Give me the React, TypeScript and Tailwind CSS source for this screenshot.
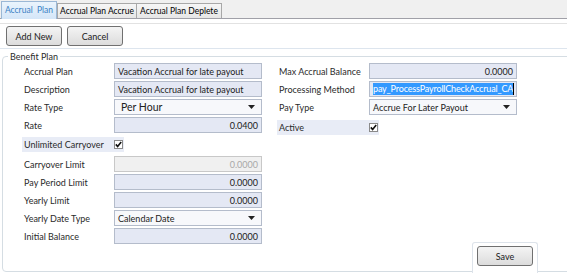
// App.tsx
import React from "react";

const font = "font-['Lato',_'Liberation_Sans',_sans-serif]";

const Check: React.FC = () => (
  <svg width="9" height="9" viewBox="0 0 9 9" className="block">
    <rect x="0.5" y="0.5" width="8" height="8" fill="#fff" stroke="#8a8a8a" />
    <path d="M1.8 4.4 L3.6 6.4 L7.2 2" stroke="#111" strokeWidth="1.6" fill="none" />
  </svg>
);

const Arrow: React.FC = () => (
  <svg width="7" height="4" viewBox="0 0 7 4" className="block">
    <path d="M0 0 H7 L3.5 4 Z" fill="#222" />
  </svg>
);

type FieldProps = {
  label: string;
  value: string;
  align?: "left" | "right";
  kind?: "text" | "select" | "disabled" | "selected";
  big?: boolean;
};

const Field: React.FC<FieldProps> = ({ label, value, align = "left", kind = "text", big }) => {
  let box = "bg-[#e4e8f4] border-[#b4bccb]";
  if (kind === "select") box = "bg-[#f7f8fb] border-[#b4bccb]";
  if (kind === "disabled") box = "bg-[#f0f0f0] border-[#c8c8c8] text-[#a8a8a8]";
  return (
    <div className="flex items-center h-[16px]">
      <div className="w-[92px] pl-[2px] text-[#2a2a2a]">{label}</div>
      <div
        className={`w-[148px] h-[16px] border flex items-center px-[3px] text-[#222] ${box} ${
          align === "right" ? "justify-end" : "justify-between"
        }`}
      >
        {kind === "selected" ? (
          <span className="flex items-center">
            <span className="bg-[#3399ff] text-white leading-[12px] tracking-[-0.15px]">{value}</span>
            <span className="w-px h-[12px] bg-black" />
          </span>
        ) : (
          <span className={big ? "text-[10.5px] pl-[3px]" : ""}>{value}</span>
        )}
        {kind === "select" && (
          <span className="pr-[3px]">
            <Arrow />
          </span>
        )}
      </div>
    </div>
  );
};

const CheckRow: React.FC<{ label: string; width: string }> = ({ label, width }) => (
  <div className={`flex items-center h-[15px] bg-[#e8ecf6] ${width}`}>
    <div className="w-[92px] pl-[2px] text-[#2a2a2a]">{label}</div>
    <Check />
  </div>
);

const Button: React.FC<{ text: string }> = ({ text }) => (
  <button className="w-[56px] h-[20px] rounded-[3px] border border-[#707070] bg-gradient-to-b from-[#f4f4f4] to-[#dcdcdc] text-[#1a1a1a] flex items-center justify-center">
    {text}
  </button>
);

const App: React.FC = () => {
  return (
    <div className={`w-[567px] h-[274px] bg-white overflow-hidden text-[9px] leading-[11px] whitespace-nowrap ${font}`}>
      {/* tabs */}
      <div className="h-[19px] bg-[#f0f0f0] border-b border-[#a0a0a8] flex items-end pl-[1px] text-[8.5px]">
        <div className="w-[56px] h-[18px] -mb-px bg-gradient-to-b from-[#eaf4fd] to-[#d4e6f8] border border-b-0 border-[#9bb8d6] text-[#3a7fc4] flex items-center justify-center">
          Accrual&nbsp; Plan
        </div>
        <div className="h-[15px] w-[80px] bg-gradient-to-b from-[#f6f6f6] to-[#e6e6e6] border border-b-0 border-[#a8a8a8] flex items-center justify-center">
          Accrual Plan Accrue
        </div>
        <div className="h-[15px] w-[85px] bg-gradient-to-b from-[#f6f6f6] to-[#e6e6e6] border border-b-0 border-l-0 border-[#a8a8a8] flex items-center justify-center">
          Accrual Plan Deplete
        </div>
      </div>

      {/* toolbar */}
      <div className="mt-[4px] h-[26px] border-t border-b border-t-[#e2e2e2] border-b-[#dde5ee] flex gap-[5px] pl-[6px] pt-[2px]">
        <Button text="Add New" />
        <Button text="Cancel" />
      </div>

      {/* group box */}
      <fieldset className="mt-[2px] ml-[2px] w-[580px] h-[221px] border border-[#d5dde3] rounded-[4px] relative">
        <legend className="ml-[5px] px-[2px] text-[#2a2a2a]">Benefit Plan</legend>
        <div className="flex pt-[1px] pl-[19px] gap-[15px]">
          <div className="flex flex-col w-[240px]">
            <div className="flex flex-col gap-[2px]">
              <Field label="Accrual Plan" value="Vacation Accrual for late payout" />
              <Field label="Description" value="Vacation Accrual for late payout" />
              <Field label="Rate Type" value="Per Hour" kind="select" big />
              <Field label="Rate" value="0.0400" align="right" />
            </div>
            <div className="h-[23px] pt-[4px]">
              <CheckRow label="Unlimited Carryover" width="w-[102px]" />
            </div>
            <div className="flex flex-col gap-[2px]">
              <Field label="Carryover Limit" value="0.0000" align="right" kind="disabled" />
              <Field label="Pay Period Limit" value="0.0000" align="right" />
              <Field label="Yearly Limit" value="0.0000" align="right" />
              <Field label="Yearly Date Type" value="Calendar Date" kind="select" />
              <Field label="Initial Balance" value="0.0000" align="right" />
            </div>
          </div>
          <div className="flex flex-col w-[240px]">
            <div className="flex flex-col gap-[2px]">
              <Field label="Max Accrual Balance" value="0.0000" align="right" />
              <Field label="Processing Method" value="pay_ProcessPayrollCheckAccrual_CA" kind="selected" />
              <Field label="Pay Type" value="Accrue For Later Payout" kind="select" />
            </div>
            <div className="pt-[5px]">
              <CheckRow label="Active" width="w-[102px]" />
            </div>
          </div>
        </div>
        {/* save panel sits over the bottom border */}
        <div className="absolute left-[469px] bottom-[-2px] w-[66px] h-[31px] bg-white border border-b-0 border-[#dde3ea] rounded-t-[3px] pt-[3px] pl-[4px]">
          <Button text="Save" />
        </div>
      </fieldset>
    </div>
  );
};

export default App;
